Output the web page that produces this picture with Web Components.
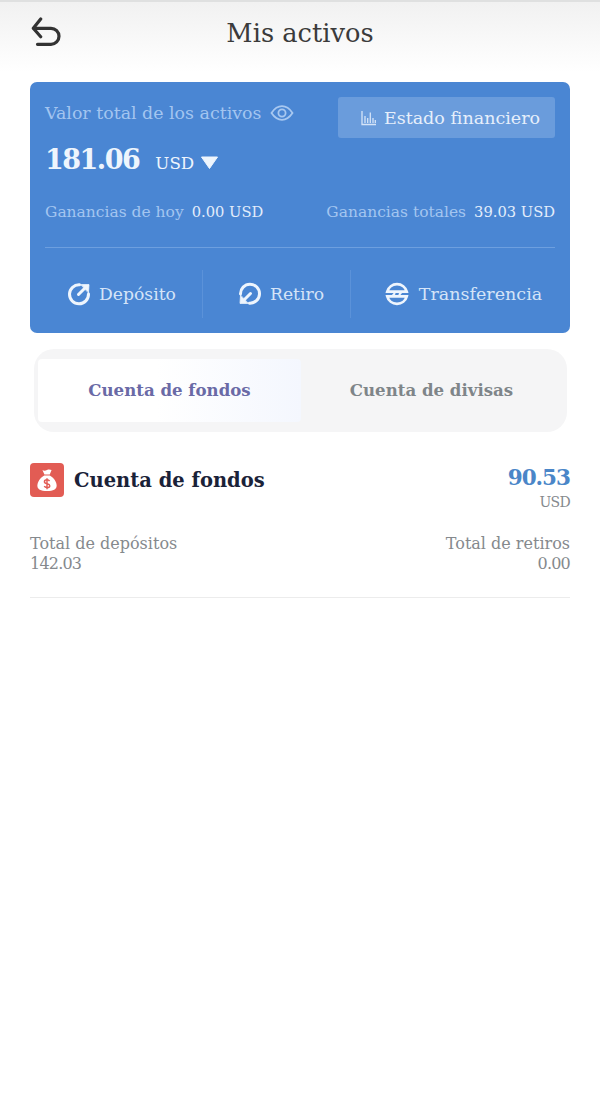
<!DOCTYPE html>
<html lang="es">
<head>
<meta charset="utf-8">
<title>Mis activos</title>
<style>
  html, body { margin: 0; padding: 0; background: #fff; }
  body { width: 600px; height: 1112px; overflow: hidden; font-family: "DejaVu Serif", "Liberation Serif", serif; }
</style>
</head>
<body>
<top-bar>Mis activos</top-bar>
<assets-card></assets-card>
<account-tabs></account-tabs>
<fund-account></fund-account>

<script>
// Top bar
class TopBar extends HTMLElement {
  constructor() {
    super();
    this.attachShadow({ mode: 'open' });
    this.shadowRoot.innerHTML = `
      <style>
        :host { display: block; height: 72px; box-sizing: border-box; border-top: 2px solid #dfe0e0; padding-top: 12px;
          background: linear-gradient(#f1f1f1, #ffffff); }
        .row { display: grid; grid-template-columns: 1fr auto 1fr; align-items: center; height: 38px; }
        svg { display: block; margin-left: 30px; }
        .title { font-size: 25.7px; color: #3b3b3b; }
      </style>
      <div class="row">
        <svg width="32" height="32" viewBox="0 0 32 32" fill="none" stroke="#333" stroke-width="3.2" stroke-linecap="round" stroke-linejoin="round">
          <path d="M10.7 2 3.3 11.3l7.4 8.4"/>
          <path d="M3.8 11.3H21a8 8 0 0 1 0 16H7.5"/>
        </svg>
        <div class="title"><slot></slot></div>
        <div></div>
      </div>`;
  }
}
customElements.define('top-bar', TopBar);

// One of the three actions at the foot of the card
class CardAction extends HTMLElement {
  constructor() {
    super();
    this.attachShadow({ mode: 'open' });
    this.shadowRoot.innerHTML = `
      <style>
        :host { display: flex; align-items: center; justify-content: center; gap: 8px; color: #d5e4f8; font-size: 17.2px; height: 48px; }
        ::slotted(svg) { display: block; flex: none; }
      </style>
      <slot name="icon"></slot><slot></slot>`;
  }
}
customElements.define('card-action', CardAction);

// Blue summary card
class AssetsCard extends HTMLElement {
  constructor() {
    super();
    this.attachShadow({ mode: 'open' });
    this.shadowRoot.innerHTML = `
      <style>
        :host { display: block; margin: 10px 30px 0; height: 251px; box-sizing: border-box; padding: 15px 15px 0;
          background: #4a86d3; border-radius: 7px; }
        .top { display: flex; justify-content: space-between; align-items: flex-start; }
        .label { display: flex; align-items: center; gap: 9px; font-size: 17.4px; color: #a3c5f0; height: 32px; }
        .btn { display: flex; align-items: center; justify-content: center; gap: 8px; width: 217px; height: 41px; box-sizing: border-box; padding-left: 8px;
          background: #6a9cdc; border-radius: 3px; color: #e6effb; font-size: 17.5px; }
        .amount { display: flex; align-items: baseline; margin-top: 6px; color: #eef5fd; height: 44px; }
        .amount b { font-size: 27px; letter-spacing: -1.5px; }
        .amount span { font-size: 16.7px; margin-left: 16px; }
        .amount svg { margin-left: 7px; }
        .gains { display: flex; justify-content: space-between; margin-top: 12px; font-size: 15.5px; color: #a3c5f0; height: 24px; align-items: center; }
        .gains em { font-style: normal; font-size: 14.7px; color: #e3edfb; margin-left: 8px; }
        hr { border: 0; height: 1px; background: #6d9fdf; margin: 23px 0 0; }
        .actions { display: grid; grid-template-columns: 157px 148px 1fr; margin: 22px -15px 0 0; }
        .actions card-action + card-action { border-left: 1px solid #5b92d9; }
        .dep { padding-right: 4px; }
        .ret { padding-left: 9px; }
        .tra { padding-left: 6px; gap: 10px; font-size: 17.5px; }
      </style>
      <div class="top">
        <div class="label">Valor total de los activos
          <svg width="24" height="18" viewBox="0 0 24 18" fill="none" stroke="#a8c8f0" stroke-width="1.8">
            <path d="M1.5 9C4.5 4.5 8 2.2 12 2.2S19.5 4.5 22.5 9C19.5 13.5 16 15.8 12 15.8S4.5 13.5 1.5 9Z"/>
            <circle cx="12" cy="9" r="3.6"/>
          </svg>
        </div>
        <div class="btn">
          <svg width="15" height="16" viewBox="0 0 15 16" fill="none" stroke="#d5e4f8" stroke-width="1.3">
            <path d="M1 1v13.5h14M4 13V6M6.7 13V8M9.3 13V2.5M12 13V8M14.3 13v-3"/>
          </svg>
          Estado financiero
        </div>
      </div>
      <div class="amount">
        <b>181.06</b><span>USD</span>
        <svg width="17" height="13" viewBox="0 0 17 13"><path d="M.5 1h16L8.5 12.5Z" fill="#eef5fd" stroke="#eef5fd" stroke-linejoin="round"/></svg>
      </div>
      <div class="gains">
        <div>Ganancias de hoy<em>0.00 USD</em></div>
        <div>Ganancias totales<em>39.03 USD</em></div>
      </div>
      <hr>
      <div class="actions">
        <card-action class="dep">
          <svg slot="icon" width="24" height="24" viewBox="0 0 24 24" fill="none" stroke="#eef5fd" stroke-width="3" stroke-linecap="round">
            <path d="M12.5 2.8A9.5 9.5 0 1 0 21.5 12"/>
            <path d="M11.5 12.5 17.5 6.5"/>
            <path d="M14 2.6h8l-.5 8z" fill="#eef5fd" stroke-width=".8" stroke-linejoin="round"/>
          </svg>
          Depósito
        </card-action>
        <card-action class="ret">
          <svg slot="icon" width="24" height="24" viewBox="0 0 24 24" fill="none" stroke="#eef5fd" stroke-width="3" stroke-linecap="round">
            <g transform="rotate(180 12 12)">
              <path d="M12.5 2.8A9.5 9.5 0 1 0 21.5 12"/>
              <path d="M11.5 12.5 17.5 6.5"/>
              <path d="M14 2.6h8l-.5 8z" fill="#eef5fd" stroke-width=".8" stroke-linejoin="round"/>
            </g>
          </svg>
          Retiro
        </card-action>
        <card-action class="tra">
          <svg slot="icon" width="24" height="24" viewBox="0 0 24 24" fill="none" stroke="#eef5fd" stroke-width="2.8">
            <path d="M2.3 9.7A10 10 0 0 1 21.7 9.7Z"/>
            <path d="M2.3 14.3A10 10 0 0 0 21.7 14.3Z"/>
            <path d="M16.5 10l-2.5 3M7.5 14l2.5-3" stroke-width="2"/>
          </svg>
          Transferencia
        </card-action>
      </div>`;
  }
}
customElements.define('assets-card', AssetsCard);

// Tab switch under the card
class AccountTabs extends HTMLElement {
  constructor() {
    super();
    this.attachShadow({ mode: 'open' });
    this.shadowRoot.innerHTML = `
      <style>
        :host { display: grid; grid-template-columns: 263px 1fr; box-sizing: border-box; margin: 16px 33px 0 34px; height: 83px;
          padding: 10px 0 10px 4px; background: #f5f5f6; border-radius: 20px; font-size: 16.6px; font-weight: 700; }
        div { display: flex; align-items: center; justify-content: center; padding-bottom: 2px; }
        .on { background: linear-gradient(90deg, #ffffff 45%, #f4f7fe); border-radius: 4px; color: #6a6aa6; }
        .off { color: #7f8589; padding-right: 5px; }
      </style>
      <div class="on">Cuenta de fondos</div>
      <div class="off">Cuenta de divisas</div>`;
  }
}
customElements.define('account-tabs', AccountTabs);

// Fund account summary
class FundAccount extends HTMLElement {
  constructor() {
    super();
    this.attachShadow({ mode: 'open' });
    this.shadowRoot.innerHTML = `
      <style>
        :host { display: block; margin: 31px 30px 0; height: 135px; box-sizing: border-box; border-bottom: 1px solid #ececec; }
        .head { display: flex; justify-content: space-between; align-items: flex-start; }
        .name { display: flex; align-items: center; gap: 10px; font-size: 19.5px; font-weight: 700; color: #1a2238; height: 34px; }
        .tile { display: flex; align-items: center; justify-content: center; width: 34px; height: 34px; border-radius: 4px; background: #e25c54; }
        .value { text-align: right; }
        .value b { display: block; font-size: 21.5px; letter-spacing: -1px; line-height: 30px; color: #4a86c8; }
        .value span { display: block; font-size: 14px; letter-spacing: -.7px; line-height: 16px; margin-top: 1px; color: #85898d; }
        .totals { display: flex; justify-content: space-between; margin-top: 24px; font-size: 16px; line-height: 20px; color: #85898d; }
        .totals div + div { text-align: right; }
        .totals span { letter-spacing: -.8px; }
      </style>
      <div class="head">
        <div class="name">
          <span class="tile">
            <svg width="22" height="25" viewBox="0 0 24 26">
              <path d="M7 1.5c1.5 1 3 1 5 0s3.5-.5 5 0L15 6.5H9.2Z" fill="#fff"/>
              <path d="M9 7.5h6c4.5 2.5 7.5 7 7.5 11 0 4.5-3.5 6-10.5 6s-10.5-1.5-10.5-6c0-4 3-8.5 7.5-11Z" fill="#fff"/>
              <path d="M14.8 13.6c-.6-1-1.6-1.4-2.8-1.4-1.6 0-2.8.8-2.8 2.1 0 2.9 5.8 1.5 5.8 4.3 0 1.3-1.3 2.1-3 2.1-1.3 0-2.4-.5-3-1.5M12 10.5v12" fill="none" stroke="#e25c54" stroke-width="1.6"/>
            </svg>
          </span>
          Cuenta de fondos
        </div>
        <div class="value"><b>90.53</b><span>USD</span></div>
      </div>
      <div class="totals">
        <div>Total de depósitos<br><span>142.03</span></div>
        <div>Total de retiros<br><span>0.00</span></div>
      </div>`;
  }
}
customElements.define('fund-account', FundAccount);
</script>
</body>
</html>
